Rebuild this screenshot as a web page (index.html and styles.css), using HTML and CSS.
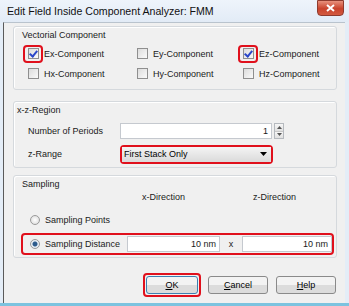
FILE: index.html
```html
<!DOCTYPE html>
<html lang="en">
  <head>
    <meta charset="UTF-8" />
    <title>Edit Field Inside Component Analyzer: FMM</title>
    <link rel="stylesheet" href="styles.css">
  </head>

  <body>
    <div class="window">
      <div class="titlebar">
        <span class="title">Edit Field Inside Component Analyzer: FMM</span>
        <span class="close">
          <svg width="9" height="8" viewBox="0 0 9 8">
            <path d="M1 1 L8 7 M8 1 L1 7" stroke="#fff" stroke-width="2" />
          </svg>
        </span>
      </div>

      <div class="client">
        <!-- Vectorial Component -->
        <div class="group group-vec">
          <div class="group-label">Vectorial Component</div>
          <div class="check-grid">
            <label class="check"><span class="cb checked mark"></span>Ex-Component</label>
            <label class="check"><span class="cb"></span>Ey-Component</label>
            <label class="check"><span class="cb checked mark"></span>Ez-Component</label>
            <label class="check"><span class="cb"></span>Hx-Component</label>
            <label class="check"><span class="cb"></span>Hy-Component</label>
            <label class="check"><span class="cb"></span>Hz-Component</label>
          </div>
        </div>

        <!-- x-z-Region -->
        <div class="group group-region">
          <div class="group-label label-xz">x-z-Region</div>
          <div class="field-row">
            <span class="field-name">Number of Periods</span>
            <span class="input periods">1</span>
            <span class="spinner">
              <span class="spin-btn"><svg width="5" height="3" viewBox="0 0 5 3"><path d="M0 3 L2.5 0 L5 3Z" fill="#555" /></svg></span>
              <span class="spin-btn"><svg width="5" height="3" viewBox="0 0 5 3"><path d="M0 0 L2.5 3 L5 0Z" fill="#555" /></svg></span>
            </span>
          </div>
          <div class="field-row">
            <span class="field-name">z-Range</span>
            <span class="hl-box">
              <span class="select">
                First Stack Only
                <svg width="7" height="4" viewBox="0 0 7 4"><path d="M0 0 L7 0 L3.5 4Z" fill="#000" /></svg>
              </span>
            </span>
          </div>
        </div>

        <!-- Sampling -->
        <div class="group group-sampling">
          <div class="group-label">Sampling</div>
          <div class="dir-head">
            <span class="dir-x">x-Direction</span>
            <span class="dir-z">z-Direction</span>
          </div>
          <label class="radio-row"><span class="radio"></span>Sampling Points</label>
          <div class="distance hl-box">
            <label class="radio-row inner"><span class="radio on"></span>Sampling Distance</label>
            <span class="input dist-x">10 nm</span>
            <span class="times">x</span>
            <span class="input dist-z">10 nm</span>
          </div>
        </div>

        <div class="buttons">
          <span class="hl-box ok-wrap"><button class="btn btn-ok"><u>O</u>K</button></span>
          <button class="btn"><u>C</u>ancel</button>
          <button class="btn"><u>H</u>elp</button>
        </div>
      </div>
    </div>
  </body>
</html>
```

FILE: styles.css
```css
body {
  margin: 0;
  padding: 0;
  font-family: "Liberation Sans", Arial, sans-serif;
  font-size: 9px;
  color: #1a1a1a;
  background: #ffffff;
}

.window {
  width: 349px;
  height: 306px;
  box-sizing: border-box;
  background: #e4edf7;
  border-bottom: 3px solid #7cc3df;
  display: flex;
  flex-direction: column;
}

.titlebar {
  height: 22px;
  display: flex;
  align-items: center;
  justify-content: space-between;
  padding: 0 5px 0 7px;
  background: linear-gradient(#eef4fb, #e2ebf6);
}

.title {
  font-size: 10.6px;
  color: #111;
}

.close {
  width: 25px;
  height: 14px;
  margin-top: -6px;
  border-radius: 0 0 4px 4px;
  border: 1px solid #8e3b2e;
  background: linear-gradient(#e8917c, #c9432c 55%, #d25a40);
  display: flex;
  align-items: center;
  justify-content: center;
}

.client {
  flex: 1;
  margin: 0 4px 0 3px;
  border-left: 1px solid #5a5a5a;
  border-top: 1px solid #b9c3cd;
  background: #f0f0f0;
  padding: 3px 8px 0 9px;
}

/* Group boxes */
.group {
  border: 1px solid #d5d9dd;
  border-radius: 3px;
  box-shadow: inset 1px 1px #fff;
  box-sizing: border-box;
  position: relative;
}

.group-label {
  padding: 3px 0 0 8px;
  line-height: 11px;
}

.label-xz {
  padding-left: 3px;
}

.group-vec {
  height: 64px;
}

.group-region {
  height: 67px;
  margin-top: 11px;
}

.group-sampling {
  height: 83px;
  margin-top: 7px;
}

/* Checkboxes */
.check-grid {
  display: grid;
  grid-template-columns: 109px 106px auto;
  row-gap: 9px;
  padding: 7px 0 0 14px;
}

.check {
  display: flex;
  align-items: center;
  gap: 5px;
  height: 11px;
}

.cb {
  width: 9px;
  height: 9px;
  border: 1px solid #8f8f8f;
  background: linear-gradient(135deg, #dcdcdc, #fafafa);
  position: relative;
  flex: none;
}

.cb.checked::before {
  content: "";
  position: absolute;
  left: 2px;
  top: 0px;
  width: 3px;
  height: 6px;
  border: solid #2b47c8;
  border-width: 0 2px 2px 0;
  transform: rotate(40deg);
}

.mark::after {
  content: "";
  position: absolute;
  left: -6px;
  top: -4px;
  width: 16px;
  height: 14px;
  border: 2.5px solid #e0101c;
  border-radius: 4px;
}

/* x-z-Region */
.field-row {
  display: flex;
  align-items: center;
  height: 16px;
  padding-left: 14px;
  margin-top: 7px;
}

.field-row + .field-row {
  margin-top: 7px;
}

.field-name {
  width: 92px;
}

.input {
  background: #fff;
  border: 1px solid #c5c9cf;
  box-sizing: border-box;
  height: 16px;
  line-height: 14px;
  text-align: right;
  padding-right: 3px;
}

.periods {
  width: 152px;
}

.spinner {
  display: flex;
  flex-direction: column;
  margin-left: 2px;
  width: 10px;
  height: 16px;
  border: 1px solid #b5b9be;
  box-sizing: border-box;
}

.spin-btn {
  flex: 1;
  display: flex;
  align-items: center;
  justify-content: center;
  background: linear-gradient(#f6f6f6, #e0e0e0);
}

.spin-btn + .spin-btn {
  border-top: 1px solid #c8c8c8;
}

.hl-box {
  border: 2.5px solid #e0101c;
  border-radius: 4px;
}

.select {
  display: flex;
  align-items: center;
  justify-content: space-between;
  width: 149px;
  height: 15px;
  padding: 0 4px 0 2px;
  box-sizing: border-box;
  background: linear-gradient(#f4f4f4, #dadada);
  color: #000;
}

/* Sampling */
.dir-head {
  display: flex;
  padding-top: 2px;
  height: 12px;
}

.dir-x {
  margin-left: 128px;
}

.dir-z {
  margin-left: 68px;
}

.radio-row {
  display: flex;
  align-items: center;
  gap: 5px;
  padding-left: 16px;
  margin-top: 10px;
  height: 12px;
}

.radio-row.inner {
  margin-top: 0;
  padding-left: 7px;
  width: 97px;
  flex: none;
}

.radio {
  width: 8px;
  height: 8px;
  border-radius: 50%;
  border: 1px solid #9a9a9a;
  background: radial-gradient(circle, #ffffff, #d8d8d8);
  flex: none;
}

.radio.on {
  background: radial-gradient(circle, #2d5b8c 0 2px, #e8eef4 3px);
}

.distance {
  display: flex;
  align-items: center;
  margin: 7px 2px 0 7px;
  height: 18px;
}

.dist-x {
  width: 94px;
}

.times {
  width: 22px;
  text-align: center;
}

.dist-z {
  width: 91px;
}

/* Buttons */
.buttons {
  display: flex;
  align-items: center;
  justify-content: flex-end;
  gap: 8px;
  margin-top: 15px;
  padding-right: 1px;
}

.ok-wrap {
  padding: 1px;
  margin-right: -1px;
}

.btn {
  width: 60px;
  height: 18px;
  font-family: "Liberation Sans", Arial, sans-serif;
  font-size: 9px;
  color: #000;
  border: 1px solid #8a8a8a;
  border-radius: 3px;
  background: linear-gradient(#f3f3f3 50%, #dcdcdc 50%);
  padding: 0;
}

.btn-ok {
  width: 52px;
  border-color: #3c7fb1;
}
```
